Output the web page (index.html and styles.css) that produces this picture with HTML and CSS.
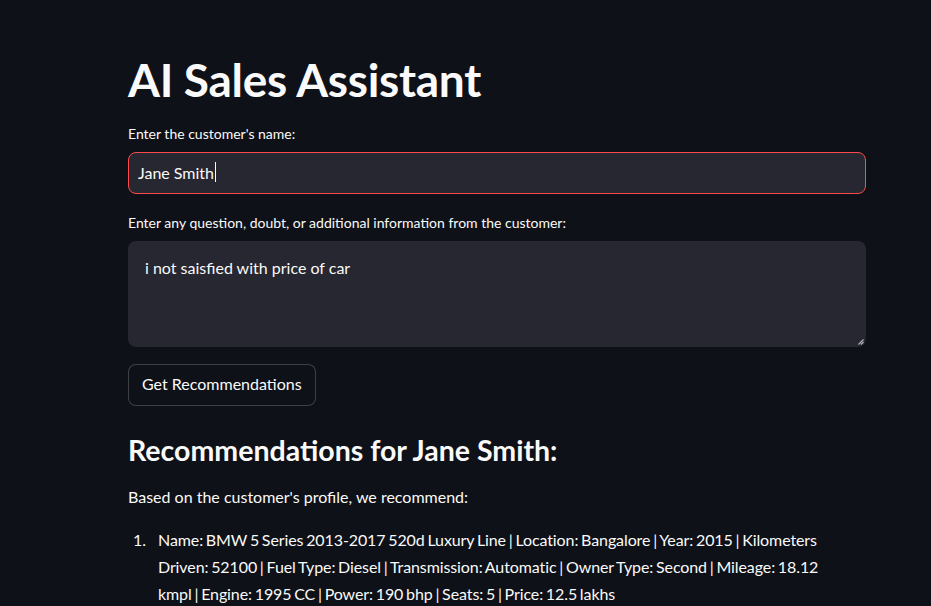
FILE: index.html
```html
<!DOCTYPE html>
<html>
<head>
<meta charset="utf-8">
<link rel="stylesheet" href="styles.css">
</head>
<body>
<main class="app">
  <div class="block">
    <h1 class="title">AI Sales Assistant</h1>
    <div class="field">
      <label class="label">Enter the customer's name:</label>
      <div class="input focused"><span class="value">Jane Smith</span><span class="caret"></span></div>
    </div>
    <div class="field">
      <label class="label">Enter any question, doubt, or additional information from the customer:</label>
      <div class="textarea"><span class="value">i not saisfied with price of car</span>
        <svg class="grip" width="6" height="6" viewBox="0 0 6 6"><path d="M5.5 0.5 L0.5 5.5" stroke="#b0b0b8" stroke-width="1.2"/><path d="M5.5 3 L3 5.5" stroke="#b0b0b8" stroke-width="1.2"/></svg>
      </div>
    </div>
    <button class="btn">Get Recommendations</button>
    <h2 class="subtitle">Recommendations for Jane Smith:</h2>
    <p class="para">Based on the customer's profile, we recommend:</p>
    <ol class="list">
      <li class="item"><span class="text">Name: BMW 5 Series 2013-2017 520d Luxury Line | Location: Bangalore | Year: 2015 | Kilometers Driven: 52100 | Fuel Type: Diesel | Transmission: Automatic | Owner Type: Second | Mileage: 18.12 kmpl | Engine: 1995 CC | Power: 190 bhp | Seats: 5 | Price: 12.5 lakhs</span></li>
    </ol>
  </div>
</main>
</body>
</html>
```
FILE: styles.css
```css
html, body {
  margin: 0;
  padding: 0;
  background: #0e1117;
  color: #fafafa;
  font-family: Lato, "Open Sans", sans-serif;
  height: 100%;
  overflow: hidden;
}
.app {
  display: flex;
  padding-left: 128px;
}
.block {
  width: 738px;
  padding-top: 52px;
  display: flex;
  flex-direction: column;
}
.title {
  margin: 0;
  font-size: 46px;
  font-weight: 700;
  line-height: 56px;
  letter-spacing: -0.3px;
}
.field {
  display: flex;
  flex-direction: column;
  margin-top: 16px;
}
.field + .field { margin-top: 19px; }
.label {
  font-size: 14px;
  line-height: 20px;
  margin-bottom: 8px;
}
.input {
  box-sizing: border-box;
  height: 42px;
  border: 1px solid #ff4b4b;
  border-radius: 8px;
  background: #262730;
  display: flex;
  align-items: center;
  padding: 0 9px 2px;
  font-size: 16px;
}
.caret {
  width: 1px;
  height: 20px;
  background: #fafafa;
  margin-left: 1px;
}
.textarea {
  position: relative;
  height: 106px;
  border-radius: 8px;
  background: #262730;
  box-sizing: border-box;
  padding: 17px 17px;
  font-size: 16px;
  line-height: 20px;
}
.grip {
  position: absolute;
  right: 2px;
  bottom: 2px;
}
.btn {
  align-self: flex-start;
  margin-top: 17px;
  height: 42px;
  padding: 0 13px 3px;
  background: #0e1117;
  color: #fafafa;
  border: 1px solid rgba(250,250,250,0.2);
  border-radius: 8px;
  font-family: inherit;
  font-size: 16px;
}
.subtitle {
  margin: 26px 0 0;
  font-size: 28.5px;
  font-weight: 700;
  line-height: 36px;
}
.para {
  margin: 15px 0 0;
  font-size: 16px;
  line-height: 27px;
}
.list {
  margin: 16px 0 0;
  padding: 0 30px 0 0;
  list-style: none;
  counter-reset: item;
  font-size: 16px;
  line-height: 27px;
}
.item {
  display: grid;
  grid-template-columns: 30px 1fr;
  counter-increment: item;
}
.item::before {
  content: counter(item) ".";
  padding-left: 5px;
}
.text {
  word-spacing: -1.2px;
  letter-spacing: -0.1px;
}
```
